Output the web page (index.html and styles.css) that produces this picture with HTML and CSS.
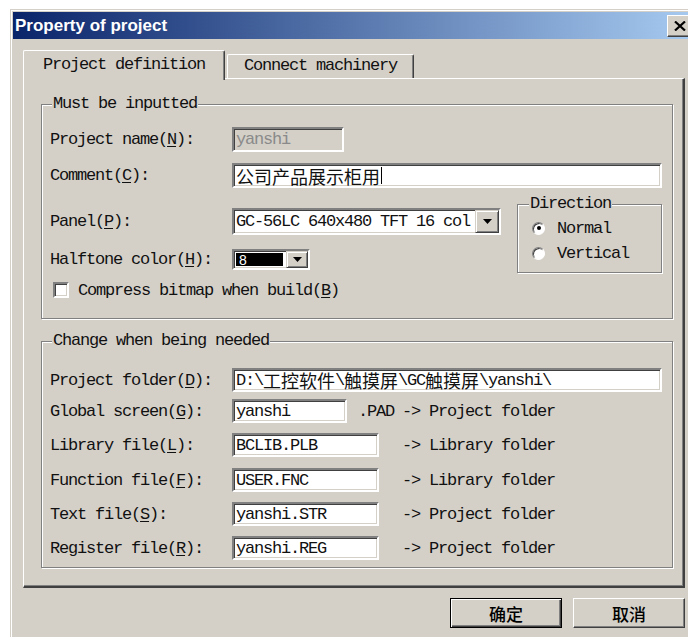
FILE: index.html
```html
<!DOCTYPE html>
<html lang="en">
<head>
<meta charset="utf-8">
<title>Property of project</title>
<link rel="stylesheet" href="styles.css">
</head>
<body>
<div class="window">
  <div class="titlebar">
    <span class="title">Property of project</span>
    <span class="close">
      <svg width="12" height="10" viewBox="0 0 12 10"><path d="M1 0.5l10 9M11 0.5L1 9.5" stroke="#000" stroke-width="2.2" fill="none"/></svg>
    </span>
  </div>

  <div class="client">
    <div class="tabs">
      <div class="tab active">Project definition</div>
      <div class="tab">Connect machinery</div>
    </div>

    <div class="page">
      <fieldset class="group must">
        <legend>Must be inputted</legend>

        <div class="row h25">
          <span class="lbl">Project name(<u>N</u>):</span>
          <div class="edit disabled w-name">yanshi</div>
        </div>

        <div class="row h25 mt11">
          <span class="lbl">Comment(<u>C</u>):</span>
          <div class="edit grow"><span class="zh">公司产品展示柜用</span><span class="caret"></span></div>
        </div>

        <div class="split">
          <div class="split-left">
            <div class="row h27">
              <span class="lbl">Panel(<u>P</u>):</span>
              <div class="combo w-panel">
                <span class="val">GC-56LC 640x480 TFT 16 col</span>
                <span class="drop"><svg width="9" height="5" viewBox="0 0 9 5"><path d="M0 0h9L4.5 5z"/></svg></span>
              </div>
            </div>
            <div class="row h21 mt14">
              <span class="lbl">Halftone color(<u>H</u>):</span>
              <div class="combo w-tone">
                <span class="val sel">8</span>
                <span class="drop"><svg width="9" height="5" viewBox="0 0 9 5"><path d="M0 0h9L4.5 5z"/></svg></span>
              </div>
            </div>
          </div>

          <fieldset class="group direction">
            <legend>Direction</legend>
            <div class="radio-row">
              <span class="radio checked"></span>
              <span>Normal</span>
            </div>
            <div class="radio-row mt9">
              <span class="radio"></span>
              <span>Vertical</span>
            </div>
          </fieldset>
        </div>

        <div class="row h16 mt12">
          <span class="check"></span>
          <span class="check-text">Compress bitmap when build(<u>B</u>)</span>
        </div>
      </fieldset>

      <fieldset class="group change">
        <legend>Change when being needed</legend>

        <div class="row h24">
          <span class="lbl">Project folder(<u>D</u>):</span>
          <div class="edit grow">D:\<span class="zh">工控软件</span>\<span class="zh">触摸屏</span>\GC<span class="zh">触摸屏</span>\yanshi\</div>
        </div>

        <div class="row h24 mt7">
          <span class="lbl">Global screen(<u>G</u>):</span>
          <div class="field">
            <div class="edit w-short">yanshi</div>
            <span class="ext">.PAD</span>
          </div>
          <span>-&gt; Project folder</span>
        </div>

        <div class="row h24 mt10">
          <span class="lbl">Library file(<u>L</u>):</span>
          <div class="field"><div class="edit w-file">BCLIB.PLB</div></div>
          <span>-&gt; Library folder</span>
        </div>

        <div class="row h24 mt11">
          <span class="lbl">Function file(<u>F</u>):</span>
          <div class="field"><div class="edit w-file">USER.FNC</div></div>
          <span>-&gt; Library folder</span>
        </div>

        <div class="row h24 mt10">
          <span class="lbl">Text file(<u>S</u>):</span>
          <div class="field"><div class="edit w-file">yanshi.STR</div></div>
          <span>-&gt; Project folder</span>
        </div>

        <div class="row h24 mt10">
          <span class="lbl">Register file(<u>R</u>):</span>
          <div class="field"><div class="edit w-file">yanshi.REG</div></div>
          <span>-&gt; Project folder</span>
        </div>
      </fieldset>
    </div>

    <div class="buttons">
      <button type="button" class="btn default">确定</button>
      <button type="button" class="btn">取消</button>
    </div>
  </div>
</div>
</body>
</html>
```

FILE: styles.css
```css
* {
  box-sizing: border-box;
}

html,
body {
  margin: 0;
  overflow: hidden;
}

/* dialog text: a 9px-pitch monospace face */
body {
  width: 688px;
  height: 637px;
  background: #fff;
  font-family: "Liberation Mono", "Noto Sans CJK SC", monospace;
  font-size: 17px;
  letter-spacing: -1.2px;
  color: #111;
}

.zh {
  font-family: "Noto Sans CJK SC", sans-serif;
  font-size: 18px;
  letter-spacing: 0;
  line-height: 1;
}

u {
  text-underline-offset: 2px;
}

/* ---- window frame ---- */
.window {
  margin: 9px 0 0 10px;
  width: 687px;
  height: 640px;
  background: #d4d0c8;
  border: 1px solid #d4d0c8;
  box-shadow: inset 1px 1px #fff;
  padding: 2px;
}

.titlebar {
  height: 27px;
  display: flex;
  align-items: center;
  justify-content: space-between;
  padding: 0 1px 0 2px;
  background: linear-gradient(to right, #0a246a, #a6caf0);
}

.title {
  font-family: "Liberation Sans", Arial, sans-serif;
  font-weight: bold;
  font-size: 17px;
  letter-spacing: 0;
  color: #fff;
}

.close {
  width: 26px;
  height: 22px;
  display: flex;
  align-items: center;
  justify-content: center;
  background: #d4d0c8;
  border: 1px solid;
  border-color: #fff #404040 #404040 #fff;
  box-shadow: inset -1px -1px #808080;
}

.client {
  padding: 11px 9px 0 10px;
}

/* ---- tabs ---- */
.tabs {
  display: flex;
  align-items: flex-end;
  height: 28px;
  position: relative;
  z-index: 1;
}

.tab {
  height: 24px;
  line-height: 22px;
  padding: 0 16px;
  margin-left: 2px;
  background: #d4d0c8;
  border-top: 1px solid #fff;
  border-left: 1px solid #fff;
  border-right: 1px solid #404040;
  box-shadow: inset -1px 0 #808080;
  border-radius: 2px 2px 0 0;
  white-space: nowrap;
}

.tab.active {
  height: 30px;
  line-height: 27px;
  padding: 0 19px;
  margin: 0 0 -2px 0;
}

.page {
  border: 1px solid #fff;
  border-right: 2px solid #404040;
  border-bottom: 2px solid #404040;
  box-shadow: inset -1px -1px #808080;
  padding: 17px 10px 18px 17px;
}

/* ---- etched group boxes ---- */
.group {
  margin: 0;
  min-width: 0;
  border: 1px solid #808080;
  box-shadow: inset 1px 1px #fff, 1px 1px #fff;
}

.group legend {
  padding: 0 1px;
  margin-left: 2px;
  line-height: 16px;
  background: #d4d0c8;
  white-space: nowrap;
}

.must {
  padding: 15px 10px 20px 8px;
}

.change {
  margin-top: 14px;
  padding: 19px 10px 7px 8px;
}

.row {
  display: flex;
  align-items: center;
  white-space: nowrap;
}

.h16 { height: 16px; }
.h21 { height: 21px; }
.h24 { height: 24px; }
.h25 { height: 25px; }
.h27 { height: 27px; }

.mt7 { margin-top: 7px; }
.mt9 { margin-top: 9px; }
.mt10 { margin-top: 10px; }
.mt11 { margin-top: 11px; }
.mt12 { margin-top: 12px; }
.mt14 { margin-top: 14px; }

.lbl {
  width: 182px;
  flex: none;
}

/* ---- sunken edit fields ---- */
.edit {
  height: 100%;
  display: flex;
  align-items: center;
  padding: 0 2px;
  background: #fff;
  border: 2px solid;
  border-color: #808080 #fff #fff #808080;
  box-shadow: inset 1px 1px #404040, inset -1px -1px #d4d0c8;
  overflow: hidden;
}

.edit.disabled {
  background: #d4d0c8;
  color: #8a8a8a;
}

.grow { flex: 1; }
.w-name { width: 112px; }
.w-short { width: 115px; }
.w-file { width: 147px; }

.caret {
  display: inline-block;
  width: 1px;
  height: 17px;
  margin-left: 1px;
  background: #000;
}

.field {
  width: 170px;
  height: 100%;
  flex: none;
  display: flex;
  align-items: center;
}

.ext {
  margin-left: 11px;
}

/* ---- combo boxes ---- */
.split {
  display: flex;
  height: 62px;
  margin-top: 20px;
}

.split-left {
  width: 451px;
  flex: none;
}

.combo {
  height: 100%;
  display: flex;
  background: #fff;
  border: 2px solid;
  border-color: #808080 #fff #fff #808080;
  box-shadow: inset 1px 1px #404040, inset -1px -1px #d4d0c8;
}

.w-panel { width: 269px; }
.w-tone { width: 78px; }

.combo .val {
  flex: 1;
  display: flex;
  align-items: center;
  padding-left: 2px;
  overflow: hidden;
}

.combo .val.sel {
  margin: 2px 3px 2px 2px;
  padding-left: 3px;
  background: #000;
  color: #fff;
  font-family: "Liberation Sans", Arial, sans-serif;
  font-size: 14px;
  letter-spacing: 0;
  line-height: 1;
}

.drop {
  width: 24px;
  flex: none;
  display: flex;
  align-items: center;
  justify-content: center;
  background: #d4d0c8;
  border: 1px solid;
  border-color: #d4d0c8 #404040 #404040 #d4d0c8;
  box-shadow: inset 1px 1px #fff, inset -1px -1px #808080;
}

.w-tone .drop {
  width: 22px;
}

/* ---- direction radio group ---- */
.direction {
  flex: 1;
  height: 77px;
  margin: -12px 0 0 16px;
  padding: 8px 4px 0 14px;
}

.direction legend {
  margin-left: -3px;
}

.radio-row {
  height: 16px;
  display: flex;
  align-items: center;
  gap: 12px;
}

.radio {
  width: 13px;
  height: 13px;
  flex: none;
  border-radius: 50%;
  background: #fff;
  border: 1px solid;
  border-color: #808080 #fff #fff #808080;
  box-shadow: inset 1px 1px #404040;
  display: flex;
  align-items: center;
  justify-content: center;
}

.radio.checked::after {
  content: "";
  width: 4px;
  height: 4px;
  border-radius: 50%;
  background: #000;
}

/* ---- checkbox ---- */
.check {
  width: 16px;
  height: 16px;
  flex: none;
  margin-left: 3px;
  background: #fff;
  border: 2px solid;
  border-color: #808080 #fff #fff #808080;
  box-shadow: inset 1px 1px #404040, inset -1px -1px #d4d0c8;
}

.check-text {
  margin-left: 9px;
}

/* ---- push buttons ---- */
.buttons {
  display: flex;
  justify-content: flex-end;
  gap: 11px;
  margin-top: 10px;
}

.btn {
  width: 112px;
  height: 30px;
  margin: 0;
  padding: 0;
  background: #d4d0c8;
  color: #000;
  font-family: "Noto Sans CJK SC", sans-serif;
  font-size: 17px;
  font-weight: 500;
  letter-spacing: 0;
  border: 1px solid;
  border-color: #fff #404040 #404040 #fff;
  box-shadow: inset -1px -1px #808080;
  display: flex;
  align-items: center;
  justify-content: center;
}

.btn.default {
  border: 1px solid #000;
  box-shadow: inset 1px 1px #fff, inset -1px -1px #404040, inset -2px -2px #808080;
}
```
